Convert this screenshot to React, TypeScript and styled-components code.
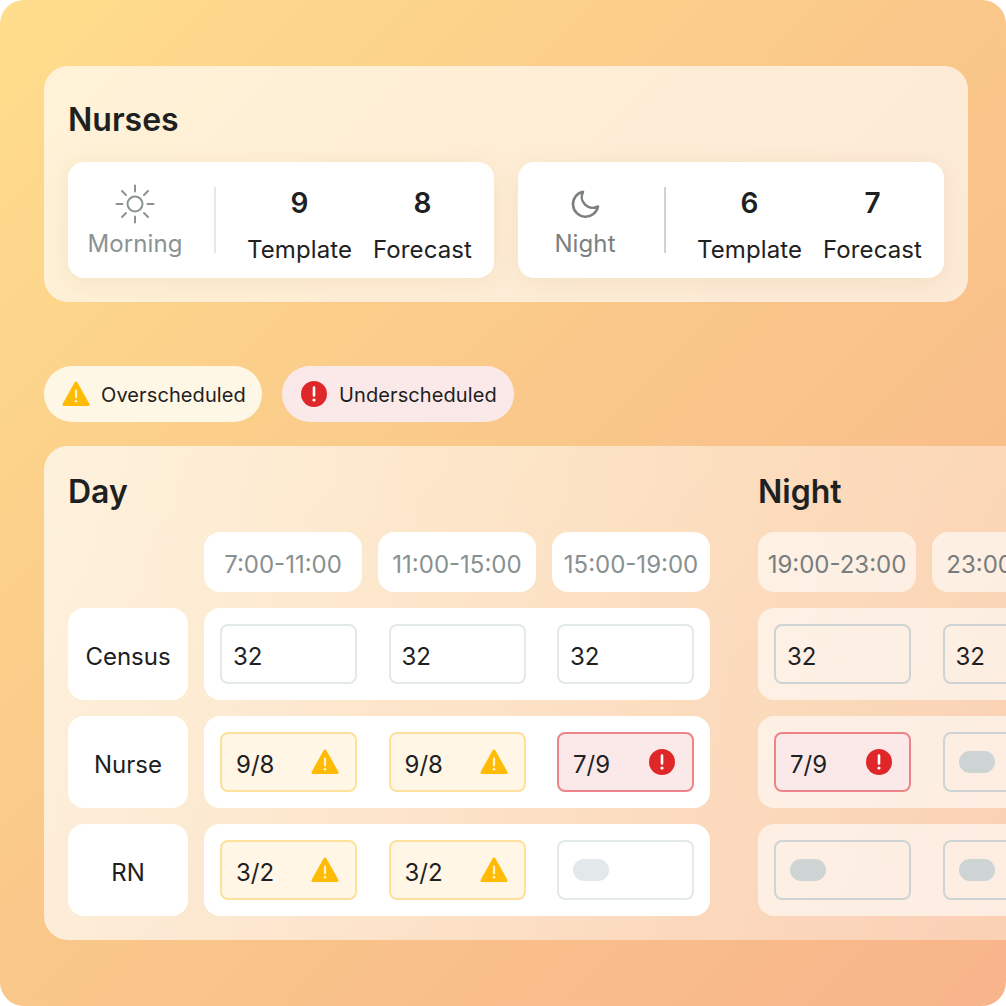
import styled, { createGlobalStyle } from "styled-components";

const GlobalStyle = createGlobalStyle`
    html, body {
        margin: 0;
        padding: 0;
        background: #ffffff;
    }
    * {
        box-sizing: border-box;
    }
`;

const Frame = styled.div`
    width: 1006px;
    height: 1006px;
    padding: 66px 0 0 44px;
    border-radius: 24px;
    overflow: hidden;
    display: flex;
    flex-direction: column;
    align-items: flex-start;
    font-family: Inter, "Noto Sans", sans-serif;
    color: #1e2122;
    background: linear-gradient(135deg, #ffdd8c 0%, #fac98a 45%, #f8b48b 100%);
`;

const NursesPanel = styled.section`
    width: 924px;
    height: 236px;
    padding: 34px 24px 24px;
    border-radius: 24px;
    background: rgba(255, 255, 255, 0.65);
`;

const PanelTitle = styled.h2`
    margin: 0;
    height: 38px;
    padding-top: 1px;
    font-size: 32px;
    line-height: 38px;
    font-weight: 600;
`;

const CardRow = styled.div`
    display: flex;
    gap: 24px;
    margin-top: 24px;
`;

const ShiftCard = styled.div`
    width: 426px;
    height: 116px;
    padding-left: 20px;
    display: flex;
    align-items: center;
    border-radius: 16px;
    background: #ffffff;
    box-shadow: 0 4px 24px rgba(170, 110, 50, 0.1);
`;

const ShiftLabel = styled.div<{ $muted?: boolean }>`
    width: 94px;
    padding-top: 2px;
    display: flex;
    flex-direction: column;
    align-items: center;
    gap: 5px;
    font-size: 24px;
    line-height: 30px;
    letter-spacing: 0.1px;
    white-space: nowrap;
    color: ${(p) => (p.$muted ? "#8a9292" : "#7b8080")};
`;

const Divider = styled.div<{ $muted?: boolean }>`
    width: 2px;
    height: 66px;
    margin: 0 31px 0 32px;
    background: ${(p) => (p.$muted ? "#e2e8ec" : "#cfd2d2")};
`;

const Stats = styled.div`
    padding-top: 11px;
    display: flex;
    gap: 21px;
`;

const Stat = styled.div`
    display: flex;
    flex-direction: column;
    align-items: center;
    gap: 15px;
    font-size: 24px;
    line-height: 30px;
    letter-spacing: 0.1px;
    white-space: nowrap;
    b {
        font-size: 28px;
        line-height: 34px;
        font-weight: 600;
    }
`;

const Legend = styled.div`
    display: flex;
    gap: 20px;
    margin-top: 64px;
`;

const LegendPill = styled.div<{ $tone: "warn" | "error"; $width: number }>`
    width: ${(p) => p.$width}px;
    height: 56px;
    padding-left: 18px;
    display: flex;
    align-items: center;
    gap: 11px;
    border-radius: 28px;
    font-size: 20px;
    letter-spacing: 0.1px;
    background: ${(p) => (p.$tone === "warn" ? "#fff7e6" : "#fbe9e9")};
    span {
        padding-top: 2px;
    }
`;

const SchedulePanel = styled.section`
    margin-top: 24px;
    padding: 24px;
    width: max-content;
    display: flex;
    gap: 48px;
    flex-shrink: 0;
    border-radius: 24px;
    background: linear-gradient(100deg, rgba(255, 255, 255, 0.7) 0%, rgba(255, 255, 255, 0.43) 55%, rgba(255, 255, 255, 0.3) 100%);
`;

const ShiftGroup = styled.div`
    display: flex;
    flex-direction: column;
`;

const GroupTitle = styled.h3`
    margin: 0 0 22px;
    height: 40px;
    padding-top: 2px;
    font-size: 32px;
    line-height: 40px;
    font-weight: 600;
`;

const GroupBody = styled.div`
    display: flex;
    gap: 16px;
`;

const LabelColumn = styled.div`
    width: 120px;
    padding-top: 76px;
    display: flex;
    flex-direction: column;
    gap: 16px;
`;

const RowLabel = styled.div`
    height: 92px;
    padding-top: 4px;
    display: flex;
    align-items: center;
    justify-content: center;
    border-radius: 16px;
    font-size: 24px;
    background: #ffffff;
`;

const Rows = styled.div`
    display: flex;
    flex-direction: column;
    gap: 16px;
`;

const TimeRow = styled.div`
    display: flex;
    gap: 16px;
`;

const TimeSlot = styled.div<{ $dim?: boolean }>`
    width: 158px;
    height: 60px;
    padding-top: 4px;
    display: flex;
    align-items: center;
    justify-content: center;
    border-radius: 16px;
    font-size: 24px;
    white-space: nowrap;
    color: ${(p) => (p.$dim ? "#777d7d" : "#899090")};
    background: ${(p) => (p.$dim ? "rgba(255, 255, 255, 0.6)" : "#ffffff")};
`;

const CellRow = styled.div<{ $dim?: boolean }>`
    width: 506px;
    height: 92px;
    padding: 16px;
    display: flex;
    justify-content: space-between;
    border-radius: 16px;
    background: ${(p) => (p.$dim ? "rgba(255, 255, 255, 0.6)" : "#ffffff")};
`;

type Tone = "plain" | "warn" | "error";

const Cell = styled.div<{ $tone: Tone; $dim?: boolean }>`
    width: 137px;
    height: 60px;
    padding: 0 16px 0 ${(p) => (p.$tone === "plain" ? 11 : 14)}px;
    display: flex;
    align-items: center;
    justify-content: space-between;
    border-radius: 8px;
    border: 2px solid
        ${(p) =>
            p.$tone === "warn"
                ? "#fde09c"
                : p.$tone === "error"
                  ? "#ee8489"
                  : p.$dim
                    ? "#ced4d4"
                    : "#e3e8eb"};
    background: ${(p) => (p.$tone === "warn" ? "#fff6e5" : p.$tone === "error" ? "#fbe9e9" : "transparent")};
    font-size: 24px;
    span {
        padding-top: 4px;
    }
`;

const Skeleton = styled.div<{ $dim?: boolean }>`
    width: 36px;
    height: 22px;
    margin-left: 3px;
    border-radius: 11px;
    background: ${(p) => (p.$dim ? "#ced3d3" : "#e3e8eb")};
`;

const SunIcon = () => (
    <svg width="40" height="40" viewBox="0 0 40 40" fill="none" stroke="#8a9292" strokeWidth="2" strokeLinecap="round">
        <circle cx="20" cy="20" r="7.5" />
        <path d="M20 1.5v6M20 32.5v6M1.5 20h6M32.5 20h6M7 7l4 4M29 29l4 4M7 33l4-4M29 11l4-4" />
    </svg>
);

const MoonIcon = () => (
    <svg width="40" height="40" viewBox="0 0 40 40" fill="none" stroke="#7b8080" strokeWidth="2.6" strokeLinecap="round" strokeLinejoin="round">
        <path d="M18 7.8a12.6 12.6 0 1 0 15 14.7a11 11 0 0 1-15-14.7z" />
    </svg>
);

const WarnIcon = () => (
    <svg width="28" height="28" viewBox="0 0 28 28">
        <path d="M14 3 L26 24.5 H2 Z" fill="#ffbb05" stroke="#ffbb05" strokeWidth="3" strokeLinejoin="round" />
        <path d="M14 10.5v7" stroke="#fff3d0" strokeWidth="2.2" strokeLinecap="round" />
        <circle cx="14" cy="21.3" r="1.3" fill="#fff3d0" />
    </svg>
);

const ErrorIcon = () => (
    <svg width="28" height="28" viewBox="0 0 28 28">
        <circle cx="14" cy="14" r="13" fill="#df2729" />
        <path d="M14 7.5v8" stroke="#ffffff" strokeWidth="2.6" strokeLinecap="round" />
        <circle cx="14" cy="20" r="1.6" fill="#ffffff" />
    </svg>
);

const shifts = [
    { label: "Morning", icon: <SunIcon />, template: 9, forecast: 8, muted: true },
    { label: "Night", icon: <MoonIcon />, template: 6, forecast: 7, muted: false },
];

type CellData = { text?: string; tone: Tone; empty?: boolean };

const p = (text: string): CellData => ({ text, tone: "plain" });
const w = (text: string): CellData => ({ text, tone: "warn" });
const e = (text: string): CellData => ({ text, tone: "error" });
const none: CellData = { tone: "plain", empty: true };

const dayRows = [
    [p("32"), p("32"), p("32")],
    [w("9/8"), w("9/8"), e("7/9")],
    [w("3/2"), w("3/2"), none],
];

const nightRows = [
    [p("32"), p("32"), p("32")],
    [e("7/9"), none, none],
    [none, none, none],
];

const Schedule = ({ times, rows, dim }: { times: string[]; rows: CellData[][]; dim?: boolean }) => (
    <Rows>
        <TimeRow>
            {times.map((t) => (
                <TimeSlot key={t} $dim={dim}>
                    {t}
                </TimeSlot>
            ))}
        </TimeRow>
        {rows.map((row, i) => (
            <CellRow key={i} $dim={dim}>
                {row.map((c, j) => (
                    <Cell key={j} $tone={c.tone} $dim={dim}>
                        {c.empty ? <Skeleton $dim={dim} /> : <span>{c.text}</span>}
                        {c.tone === "warn" && <WarnIcon />}
                        {c.tone === "error" && <ErrorIcon />}
                    </Cell>
                ))}
            </CellRow>
        ))}
    </Rows>
);

const App = () => {
    return (
        <>
            <GlobalStyle />
            <Frame>
                <NursesPanel>
                    <PanelTitle>Nurses</PanelTitle>
                    <CardRow>
                        {shifts.map((s) => (
                            <ShiftCard key={s.label}>
                                <ShiftLabel $muted={s.muted}>
                                    {s.icon}
                                    {s.label}
                                </ShiftLabel>
                                <Divider $muted={s.muted} />
                                <Stats>
                                    <Stat>
                                        <b>{s.template}</b>
                                        Template
                                    </Stat>
                                    <Stat>
                                        <b>{s.forecast}</b>
                                        Forecast
                                    </Stat>
                                </Stats>
                            </ShiftCard>
                        ))}
                    </CardRow>
                </NursesPanel>
                <Legend>
                    <LegendPill $tone="warn" $width={218}>
                        <WarnIcon />
                        <span>Overscheduled</span>
                    </LegendPill>
                    <LegendPill $tone="error" $width={232}>
                        <ErrorIcon />
                        <span>Underscheduled</span>
                    </LegendPill>
                </Legend>
                <SchedulePanel>
                    <ShiftGroup>
                        <GroupTitle>Day</GroupTitle>
                        <GroupBody>
                            <LabelColumn>
                                <RowLabel>Census</RowLabel>
                                <RowLabel>Nurse</RowLabel>
                                <RowLabel>RN</RowLabel>
                            </LabelColumn>
                            <Schedule times={["7:00-11:00", "11:00-15:00", "15:00-19:00"]} rows={dayRows} />
                        </GroupBody>
                    </ShiftGroup>
                    <ShiftGroup>
                        <GroupTitle>Night</GroupTitle>
                        <Schedule times={["19:00-23:00", "23:00-3:00", "3:00-7:00"]} rows={nightRows} dim />
                    </ShiftGroup>
                </SchedulePanel>
            </Frame>
        </>
    );
};

export default App;
